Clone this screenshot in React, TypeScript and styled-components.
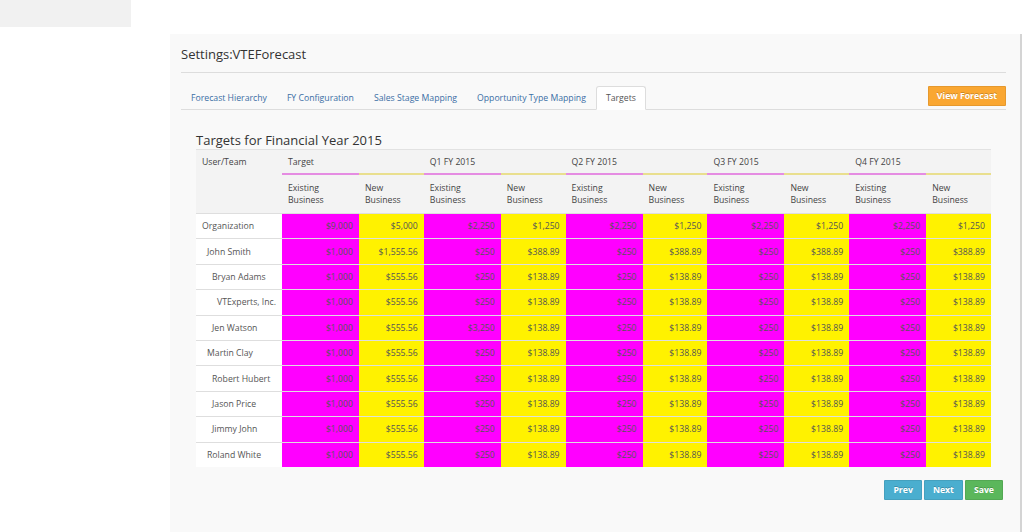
import React from 'react';
import styled, {createGlobalStyle} from 'styled-components';

const GlobalStyle = createGlobalStyle`
    html, body {
        margin: 0;
        padding: 0;
        background: #fff;
        font-family: "Open Sans", "Liberation Sans", sans-serif;
        color: #333;
    }
`

const TopBox = styled.div`
    width: 131px;
    height: 27px;
    background: #f1f1f1;
`

const Panel = styled.main`
    box-sizing: border-box;
    width: 852px;
    min-height: calc(100vh - 34px);
    margin: 7px 0 0 170px;
    padding: 11px 14px 0 11px;
    background: #f9f9f9;
    border-right: 2px solid #d4d4d4;
`

const Title = styled.h1`
    margin: 0;
    font-size: 13px;
    line-height: 18px;
    font-weight: normal;
    color: #333;
    padding-bottom: 9px;
    border-bottom: 1px solid #ddd;
`

const TabBar = styled.div`
    display: flex;
    justify-content: space-between;
    align-items: flex-start;
    margin-top: 13px;
    border-bottom: 1px solid #ddd;
`

const Tabs = styled.ul`
    display: flex;
    margin: 0;
    padding: 0;
    list-style: none;
`

const Tab = styled.li<{ $active?: boolean }>`
    box-sizing: border-box;
    height: 24px;
    margin-bottom: -1px;
    padding: 0 9px;
    font-size: 8.7px;
    line-height: 23px;
    color: ${p => p.$active ? '#555' : '#3b6ea5'};
    background: ${p => p.$active ? '#fff' : 'transparent'};
    border: 1px solid ${p => p.$active ? '#ddd' : 'transparent'};
    border-bottom-color: ${p => p.$active ? '#fff' : 'transparent'};
    border-radius: 3px 3px 0 0;
    cursor: pointer;
`

const Button = styled.button<{ $tone: 'warning' | 'info' | 'success' }>`
    height: 20px;
    padding: 0 8px;
    font-family: "Open Sans", "Liberation Sans", sans-serif;
    font-size: 8.7px;
    font-weight: bold;
    color: #fff;
    text-shadow: 0 -1px 0 rgba(0, 0, 0, .2);
    border: 1px solid rgba(0, 0, 0, .08);
    border-radius: 1px;
    cursor: pointer;
    background: ${p => ({warning: '#faa732', info: '#4aaecf', success: '#5bb75b'})[p.$tone]};
`

const Section = styled.section`
    margin: 21px 0 0 15px;
    width: 795px;
`

const Heading = styled.h2`
    margin: 0;
    font-size: 13px;
    line-height: 18px;
    font-weight: normal;
    color: #333;
`

const Table = styled.table`
    width: 795px;
    table-layout: fixed;
    border-collapse: collapse;
    font-size: 8.7px;
    border-top: 1px solid #e2e2e2;
`

const HeadCell = styled.th<{ $tone?: 'pink' | 'yellow' }>`
    padding: 0 6px;
    text-align: left;
    vertical-align: middle;
    font-weight: normal;
    color: #444;
    background: #f3f3f3;
    border-bottom: 2px solid ${p => p.$tone === 'pink' ? '#e58ce2' : p.$tone === 'yellow' ? '#e9df8e' : 'transparent'};
    height: 23px;
    white-space: nowrap;
`

const SubHead = styled.th`
    padding: 0 6px;
    height: 38px;
    text-align: left;
    font-weight: normal;
    line-height: 12.5px;
    color: #444;
    background: #f3f3f3;
`

const UserHead = styled.th`
    padding: 6px 6px 0;
    text-align: left;
    vertical-align: top;
    font-weight: normal;
    color: #444;
    background: #f3f3f3;
`

const Row = styled.tr`
    border-top: 1px solid #dedede;
`

const NameCell = styled.td<{ $level: number }>`
    height: 24.4px;
    padding: 0 0 0 ${p => 6 + p.$level * 5}px;
    background: #fff;
    color: #555;
    white-space: nowrap;
`

const ValueCell = styled.td<{ $tone: 'pink' | 'yellow' }>`
    padding: 0 6px 0 0;
    text-align: right;
    color: #555;
    background: ${p => p.$tone === 'pink' ? '#ff00ff' : '#fff200'};
`

const Actions = styled.div`
    display: flex;
    justify-content: flex-end;
    gap: 2px;
    margin-top: 13px;
    padding-right: 3px;
`

const tabs = ['Forecast Hierarchy', 'FY Configuration', 'Sales Stage Mapping', 'Opportunity Type Mapping', 'Targets'];
const groups = ['Target', 'Q1 FY 2015', 'Q2 FY 2015', 'Q3 FY 2015', 'Q4 FY 2015'];

const repeat = (first: string[], quarter: string[]) => [...first, ...quarter, ...quarter, ...quarter, ...quarter];
const std = repeat(['$1,000', '$555.56'], ['$250', '$138.89']);

const rows = [
  {name: 'Organization', level: 0, vals: repeat(['$9,000', '$5,000'], ['$2,250', '$1,250'])},
  {name: 'John Smith', level: 1, vals: repeat(['$1,000', '$1,555.56'], ['$250', '$388.89'])},
  {name: 'Bryan Adams', level: 2, vals: std},
  {name: 'VTExperts, Inc.', level: 3, vals: std},
  {name: 'Jen Watson', level: 2, vals: std.map((v, i) => i === 2 ? '$3,250' : v)},
  {name: 'Martin Clay', level: 1, vals: std},
  {name: 'Robert Hubert', level: 2, vals: std},
  {name: 'Jason Price', level: 2, vals: std},
  {name: 'Jimmy John', level: 2, vals: std},
  {name: 'Roland White', level: 1, vals: std},
];

export default function App() {
  return (
    <>
      <GlobalStyle/>
      <TopBox/>
      <Panel>
        <Title>Settings:VTEForecast</Title>
        <TabBar>
          <Tabs>
            {tabs.map(t => <Tab key={t} $active={t === 'Targets'}>{t}</Tab>)}
          </Tabs>
          <Button $tone="warning">View Forecast</Button>
        </TabBar>
        <Section>
          <Heading>Targets for Financial Year 2015</Heading>
          <Table>
            <colgroup>
              <col style={{width: 86}}/>
              {groups.map(g => (
                <React.Fragment key={g}>
                  <col style={{width: 77}}/>
                  <col style={{width: 64.8}}/>
                </React.Fragment>
              ))}
            </colgroup>
            <thead>
              <tr>
                <UserHead rowSpan={2}>User/Team</UserHead>
                {groups.map(g => (
                  <React.Fragment key={g}>
                    <HeadCell $tone="pink">{g}</HeadCell>
                    <HeadCell $tone="yellow"/>
                  </React.Fragment>
                ))}
              </tr>
              <tr>
                {groups.map(g => (
                  <React.Fragment key={g}>
                    <SubHead>Existing<br/>Business</SubHead>
                    <SubHead>New<br/>Business</SubHead>
                  </React.Fragment>
                ))}
              </tr>
            </thead>
            <tbody>
              {rows.map(r => (
                <Row key={r.name}>
                  <NameCell $level={r.level}>{r.name}</NameCell>
                  {r.vals.map((v, i) => (
                    <ValueCell key={i} $tone={i % 2 === 0 ? 'pink' : 'yellow'}>{v}</ValueCell>
                  ))}
                </Row>
              ))}
            </tbody>
          </Table>
        </Section>
        <Actions>
          <Button $tone="info">Prev</Button>
          <Button $tone="info">Next</Button>
          <Button $tone="success">Save</Button>
        </Actions>
      </Panel>
    </>
  );
}
